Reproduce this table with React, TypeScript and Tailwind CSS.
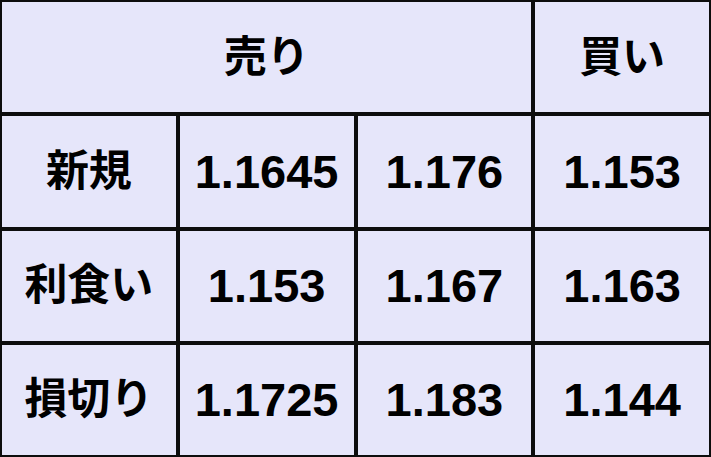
import React from "react";

const cell =
  "bg-[#e6e6fa] flex items-center justify-center text-black leading-none";
const num = "font-bold text-[47px]";
const jp = "font-semibold text-[43px]";

export default function App() {
  const rows = [
    ["新規", "1.1645", "1.176", "1.153"],
    ["利食い", "1.153", "1.167", "1.163"],
    ["損切り", "1.1725", "1.183", "1.144"],
  ];
  return (
    <div
      className="w-[711px] h-[457px] bg-[#0d0d0d] p-[2px] grid grid-cols-4 grid-rows-4 gap-[4px]"
      style={{ fontFamily: '"Liberation Sans", "Noto Sans CJK JP", sans-serif' }}
    >
      <div className={`${cell} ${jp} col-span-3`}>売り</div>
      <div className={`${cell} ${jp}`}>買い</div>
      {rows.map((r) =>
        r.map((t, i) => (
          <div key={r[0] + i} className={`${cell} ${i === 0 ? jp : num}`}>
            {t}
          </div>
        ))
      )}
    </div>
  );
}
